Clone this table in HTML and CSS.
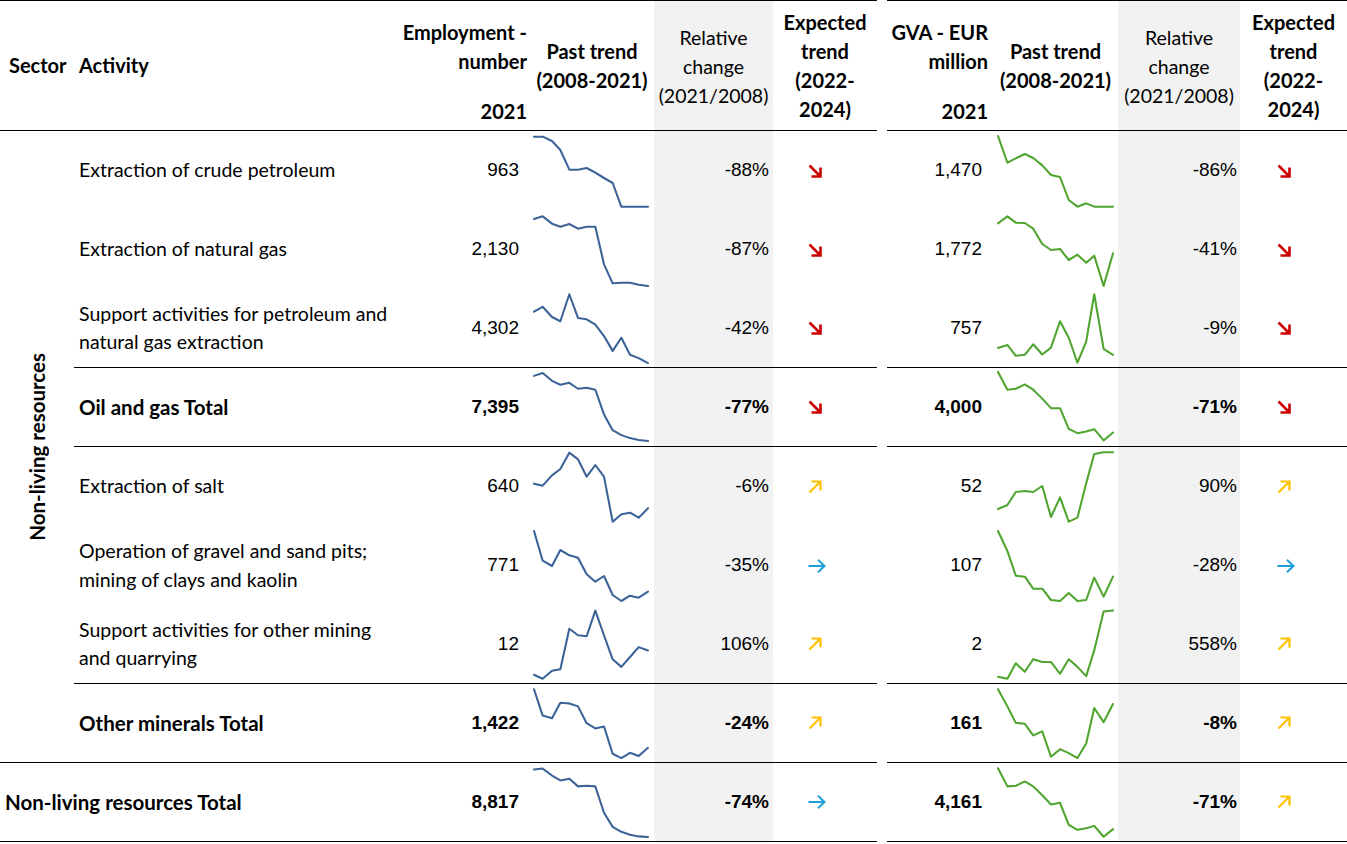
FILE: index.html
```html
<!DOCTYPE html>
<html>
<head>
<meta charset="utf-8">
<link rel="stylesheet" href="styles.css">
</head>
<body>
<div class="tbl">
  <!-- header -->
  <div class="c hd h-sector">Sector</div>
  <div class="c hd h-act">Activity</div>
  <div class="c hd h-num"><span>Employment -<br>number</span><span>2021</span></div>
  <div class="c hd h-ctr">Past trend<br>(2008-2021)</div>
  <div class="c hd rel h-ctr h-rel">Relative<br>change<br>(2021/2008)</div>
  <div class="c hd h-ctr">Expected<br>trend<br>(2022-<br>2024)</div>
  <div class="gap"></div>
  <div class="c hd h-num g-num"><span>GVA - EUR<br>million</span><span>2021</span></div>
  <div class="c hd h-ctr">Past trend<br>(2008-2021)</div>
  <div class="c hd rel h-ctr h-rel">Relative<br>change<br>(2021/2008)</div>
  <div class="c hd h-ctr">Expected<br>trend<br>(2022-<br>2024)</div>

  <!-- sector -->
  <div class="c sector bb"><span class="vert">Non-living resources</span></div>

  <!-- row 1 -->
  <div class="c act">Extraction of crude petroleum</div>
  <div class="c num">963</div>
  <div class="c spk"><svg viewBox="0 0 342 237" preserveAspectRatio="none"><polyline class="b" points="0,17 26,17 54,30 79,57 106,116 132,116 158,111 184,125 210,141 236,156 262,227 288,227 314,227 342,227"/></svg></div>
  <div class="c rel pct">-88%</div>
  <div class="c exp"><svg class="a-d" viewBox="0 0 14 14"><path d="M1.5 1.5 L12.5 12.5 M3.5 12.5 H12.5 V3.5"/></svg></div>
  <div class="gap"></div>
  <div class="c num gn">1,470</div>
  <div class="c spk gs"><svg viewBox="0 0 343 237" preserveAspectRatio="none"><polyline class="g" points="0,15 28,95 53,82 80,69 105,81 132,103 158,132 185,138 211,207 237,227 263,217 287,227 315,227 343,227"/></svg></div>
  <div class="c rel pct gp">-86%</div>
  <div class="c exp ge"><svg class="a-d" viewBox="0 0 14 14"><path d="M1.5 1.5 L12.5 12.5 M3.5 12.5 H12.5 V3.5"/></svg></div>

  <!-- row 2 -->
  <div class="c act">Extraction of natural gas</div>
  <div class="c num">2,130</div>
  <div class="c spk"><svg viewBox="0 0 342 237" preserveAspectRatio="none"><polyline class="b" points="0,27 26,19 54,41 79,50 106,42 132,56 158,50 184,50 210,163 236,220 262,218 288,218 314,224 342,228"/></svg></div>
  <div class="c rel pct">-87%</div>
  <div class="c exp"><svg class="a-d" viewBox="0 0 14 14"><path d="M1.5 1.5 L12.5 12.5 M3.5 12.5 H12.5 V3.5"/></svg></div>
  <div class="gap"></div>
  <div class="c num gn">1,772</div>
  <div class="c spk gs"><svg viewBox="0 0 343 237" preserveAspectRatio="none"><polyline class="g" points="0,40 28,19 53,38 80,39 105,56 132,102 158,120 185,117 211,150 237,134 263,158 287,137 315,228 343,130"/></svg></div>
  <div class="c rel pct gp">-41%</div>
  <div class="c exp ge"><svg class="a-d" viewBox="0 0 14 14"><path d="M1.5 1.5 L12.5 12.5 M3.5 12.5 H12.5 V3.5"/></svg></div>

  <!-- row 3 -->
  <div class="c act bb">Support activities for petroleum and<br>natural gas extraction</div>
  <div class="c num bb">4,302</div>
  <div class="c spk bb"><svg viewBox="0 0 342 237" preserveAspectRatio="none"><polyline class="b" points="0,69 26,54 54,85 79,98 106,16 132,88 158,92 184,108 210,143 236,188 262,148 288,200 314,210 342,225"/></svg></div>
  <div class="c rel pct bb">-42%</div>
  <div class="c exp bb"><svg class="a-d" viewBox="0 0 14 14"><path d="M1.5 1.5 L12.5 12.5 M3.5 12.5 H12.5 V3.5"/></svg></div>
  <div class="gap"></div>
  <div class="c num gn bb">757</div>
  <div class="c spk gs bb"><svg viewBox="0 0 343 237" preserveAspectRatio="none"><polyline class="g" points="0,179 28,170 53,203 80,200 105,168 132,199 158,178 185,98 211,148 237,224 263,160 287,16 315,182 343,200"/></svg></div>
  <div class="c rel pct gp bb">-9%</div>
  <div class="c exp ge bb"><svg class="a-d" viewBox="0 0 14 14"><path d="M1.5 1.5 L12.5 12.5 M3.5 12.5 H12.5 V3.5"/></svg></div>

  <!-- row 4: oil and gas total -->
  <div class="c act bold bb">Oil and gas Total</div>
  <div class="c num bold bb">7,395</div>
  <div class="c spk bb"><svg viewBox="0 0 342 237" preserveAspectRatio="none"><polyline class="b" points="0,24 26,15 54,39 79,51 106,45 132,63 158,60 184,66 210,141 236,189 262,204 288,213 314,219 342,222"/></svg></div>
  <div class="c rel pct bold bb">-77%</div>
  <div class="c exp bb"><svg class="a-d" viewBox="0 0 14 14"><path d="M1.5 1.5 L12.5 12.5 M3.5 12.5 H12.5 V3.5"/></svg></div>
  <div class="gap"></div>
  <div class="c num gn bold bb">4,000</div>
  <div class="c spk gs bb"><svg viewBox="0 0 343 237" preserveAspectRatio="none"><polyline class="g" points="0,12 28,66 53,63 80,50 105,66 132,93 158,122 185,122 211,185 237,198 263,193 287,186 315,220 343,196"/></svg></div>
  <div class="c rel pct gp bold bb">-71%</div>
  <div class="c exp ge bb"><svg class="a-d" viewBox="0 0 14 14"><path d="M1.5 1.5 L12.5 12.5 M3.5 12.5 H12.5 V3.5"/></svg></div>

  <!-- row 5 -->
  <div class="c act">Extraction of salt</div>
  <div class="c num">640</div>
  <div class="c spk"><svg viewBox="0 0 342 237" preserveAspectRatio="none"><polyline class="b" points="0,110 26,116 54,85 79,66 106,17 132,37 158,89 184,54 210,89 236,224 262,202 288,197 314,212 342,184"/></svg></div>
  <div class="c rel pct">-6%</div>
  <div class="c exp"><svg class="a-u" viewBox="0 0 14 14"><path d="M1.5 12.5 L12.5 1.5 M3.5 1.5 H12.5 V10.5"/></svg></div>
  <div class="gap"></div>
  <div class="c num gn">52</div>
  <div class="c spk gs"><svg viewBox="0 0 343 237" preserveAspectRatio="none"><polyline class="g" points="0,186 28,174 53,135 80,132 105,135 132,117 158,210 185,151 211,224 237,212 263,109 287,21 315,16 343,16"/></svg></div>
  <div class="c rel pct gp">90%</div>
  <div class="c exp ge"><svg class="a-u" viewBox="0 0 14 14"><path d="M1.5 12.5 L12.5 1.5 M3.5 1.5 H12.5 V10.5"/></svg></div>

  <!-- row 6 -->
  <div class="c act">Operation of gravel and sand pits;<br>mining of clays and kaolin</div>
  <div class="c num">771</div>
  <div class="c spk"><svg viewBox="0 0 342 237" preserveAspectRatio="none"><polyline class="b" points="0,15 26,104 54,120 79,72 106,88 132,95 158,145 184,167 210,150 236,207 262,225 288,209 314,215 342,197"/></svg></div>
  <div class="c rel pct">-35%</div>
  <div class="c exp"><svg class="a-r" viewBox="0 0 18 14"><path d="M0.5 7 H16.5 M10 0.8 L16.5 7 L10 13.2"/></svg></div>
  <div class="gap"></div>
  <div class="c num gn">107</div>
  <div class="c spk gs"><svg viewBox="0 0 343 237" preserveAspectRatio="none"><polyline class="g" points="0,15 28,75 53,149 80,152 105,188 132,188 158,222 185,225 211,201 237,225 263,222 287,155 315,212 343,152"/></svg></div>
  <div class="c rel pct gp">-28%</div>
  <div class="c exp ge"><svg class="a-r" viewBox="0 0 18 14"><path d="M0.5 7 H16.5 M10 0.8 L16.5 7 L10 13.2"/></svg></div>

  <!-- row 7 -->
  <div class="c act bb">Support activities for other mining<br>and quarrying</div>
  <div class="c num bb">12</div>
  <div class="c spk bb"><svg viewBox="0 0 342 237" preserveAspectRatio="none"><polyline class="b" points="0,212 26,224 54,200 79,195 106,72 132,92 158,95 184,17 210,92 236,165 262,188 288,158 314,128 342,138"/></svg></div>
  <div class="c rel pct bb">106%</div>
  <div class="c exp bb"><svg class="a-u" viewBox="0 0 14 14"><path d="M1.5 12.5 L12.5 1.5 M3.5 1.5 H12.5 V10.5"/></svg></div>
  <div class="gap"></div>
  <div class="c num gn bb">2</div>
  <div class="c spk gs bb"><svg viewBox="0 0 343 237" preserveAspectRatio="none"><polyline class="g" points="0,218 28,224 53,177 80,203 105,165 132,173 158,173 185,209 211,165 237,188 263,216 287,138 315,20 343,17"/></svg></div>
  <div class="c rel pct gp bb">558%</div>
  <div class="c exp ge bb"><svg class="a-u" viewBox="0 0 14 14"><path d="M1.5 12.5 L12.5 1.5 M3.5 1.5 H12.5 V10.5"/></svg></div>

  <!-- row 8: other minerals total -->
  <div class="c act bold bb">Other minerals Total</div>
  <div class="c num bold bb">1,422</div>
  <div class="c spk bb"><svg viewBox="0 0 342 237" preserveAspectRatio="none"><polyline class="b" points="0,16 26,96 54,104 79,57 106,59 132,68 158,119 184,135 210,129 236,212 262,225 288,209 314,219 342,194"/></svg></div>
  <div class="c rel pct bold bb">-24%</div>
  <div class="c exp bb"><svg class="a-u" viewBox="0 0 14 14"><path d="M1.5 12.5 L12.5 1.5 M3.5 1.5 H12.5 V10.5"/></svg></div>
  <div class="gap"></div>
  <div class="c num gn bold bb">161</div>
  <div class="c spk gs bb"><svg viewBox="0 0 343 237" preserveAspectRatio="none"><polyline class="g" points="0,16 28,68 53,118 80,121 105,156 132,144 158,221 185,198 211,210 237,225 263,181 287,73 315,116 343,61"/></svg></div>
  <div class="c rel pct gp bold bb">-8%</div>
  <div class="c exp ge bb"><svg class="a-u" viewBox="0 0 14 14"><path d="M1.5 12.5 L12.5 1.5 M3.5 1.5 H12.5 V10.5"/></svg></div>

  <!-- row 9: grand total -->
  <div class="c act grand bold bb">Non-living resources Total</div>
  <div class="c num bold bb">8,817</div>
  <div class="c spk bb"><svg viewBox="0 0 342 237" preserveAspectRatio="none"><polyline class="b" points="0,20 26,17 54,38 79,53 106,48 132,71 158,69 184,71 210,151 236,194 262,209 288,218 314,223 342,225"/></svg></div>
  <div class="c rel pct bold bb">-74%</div>
  <div class="c exp bb"><svg class="a-r" viewBox="0 0 18 14"><path d="M0.5 7 H16.5 M10 0.8 L16.5 7 L10 13.2"/></svg></div>
  <div class="gap"></div>
  <div class="c num gn bold bb">4,161</div>
  <div class="c spk gs bb"><svg viewBox="0 0 343 237" preserveAspectRatio="none"><polyline class="g" points="0,16 28,71 53,69 80,56 105,71 132,98 158,126 185,121 211,188 237,203 263,198 287,191 315,224 343,201"/></svg></div>
  <div class="c rel pct gp bold bb">-71%</div>
  <div class="c exp ge bb"><svg class="a-u" viewBox="0 0 14 14"><path d="M1.5 12.5 L12.5 1.5 M3.5 1.5 H12.5 V10.5"/></svg></div>
</div>
</body>
</html>
```

FILE: styles.css
```css
html, body {
  margin: 0;
  padding: 0;
  background: #ffffff;
}

body {
  font-family: Lato, "Liberation Sans", Arial, sans-serif;
  font-size: 19.5px;
  color: #000000;
}

.tbl {
  display: grid;
  width: 1347px;
  grid-template-columns: 74px 321px 135px 124px 119px 104px 10px 106px 125px 122px 107px;
  grid-template-rows: 131px repeat(9, 79px);
}

.c {
  display: flex;
  align-items: center;
  box-sizing: border-box;
  min-width: 0;
  line-height: 28.5px;
}

.gap {
  background: #ffffff;
}

.bb {
  border-bottom: 1px solid #000000;
}

.rel {
  background: #f2f2f2;
}

/* header */
.hd {
  border-top: 1px solid #000000;
  border-bottom: 1px solid #000000;
  font-weight: 700;
  font-size: 20px;
  line-height: 29px;
}

.h-sector {
  padding-left: 9px;
}

.h-act {
  padding-left: 5px;
}

.h-num {
  flex-direction: column;
  align-items: flex-end;
  justify-content: space-between;
  text-align: right;
  padding: 17px 3px 4px 0;
  white-space: nowrap;
}

.g-num {
  padding-right: 5px;
}

.h-ctr {
  justify-content: center;
  text-align: center;
}

.h-rel {
  font-weight: 400;
  font-size: 19.5px;
  padding-top: 2px;
}

/* sector column */
.sector {
  grid-row: 2 / span 8;
  justify-content: center;
  font-weight: 700;
  font-size: 20.5px;
}

.vert {
  writing-mode: vertical-rl;
  transform: rotate(180deg);
  white-space: nowrap;
  line-height: 24px;
}

/* body cells */
.act {
  padding-left: 5px;
}

.act.bold {
  font-size: 20.5px;
}

.grand {
  grid-column: 1 / span 2;
  padding-left: 5px;
}

.bold {
  font-weight: 700;
}

.num,
.pct {
  font-family: "Liberation Sans", Arial, sans-serif;
  font-size: 19px;
  justify-content: flex-end;
}

.num {
  padding-right: 11px;
}

.pct {
  padding-right: 4px;
}

.gp {
  padding-right: 3px;
}

.spk {
  padding-left: 4px;
  align-items: stretch;
}

.gs {
  padding-left: 5px;
}

.spk svg {
  display: block;
  width: 114px;
  height: 100%;
  overflow: visible;
}

.gs svg {
  width: 115px;
}

.spk polyline {
  fill: none;
  stroke-width: 6.2;
  stroke-linejoin: round;
  stroke-linecap: round;
}

.spk polyline.b {
  stroke: #3b6397;
}

.spk polyline.g {
  stroke: #4fa52f;
}

.exp {
  padding-left: 35px;
}

.ge {
  padding-left: 37px;
}

.exp svg {
  display: block;
  fill: none;
}

.a-d,
.a-u {
  width: 14px;
  height: 14px;
}

.a-r {
  width: 18px;
  height: 14px;
}

.a-d path {
  stroke: #cc0000;
  stroke-width: 2.6;
}

.a-u path {
  stroke: #ffc000;
  stroke-width: 2.2;
}

.a-r path {
  stroke: #1aa0dc;
  stroke-width: 2;
}
```
